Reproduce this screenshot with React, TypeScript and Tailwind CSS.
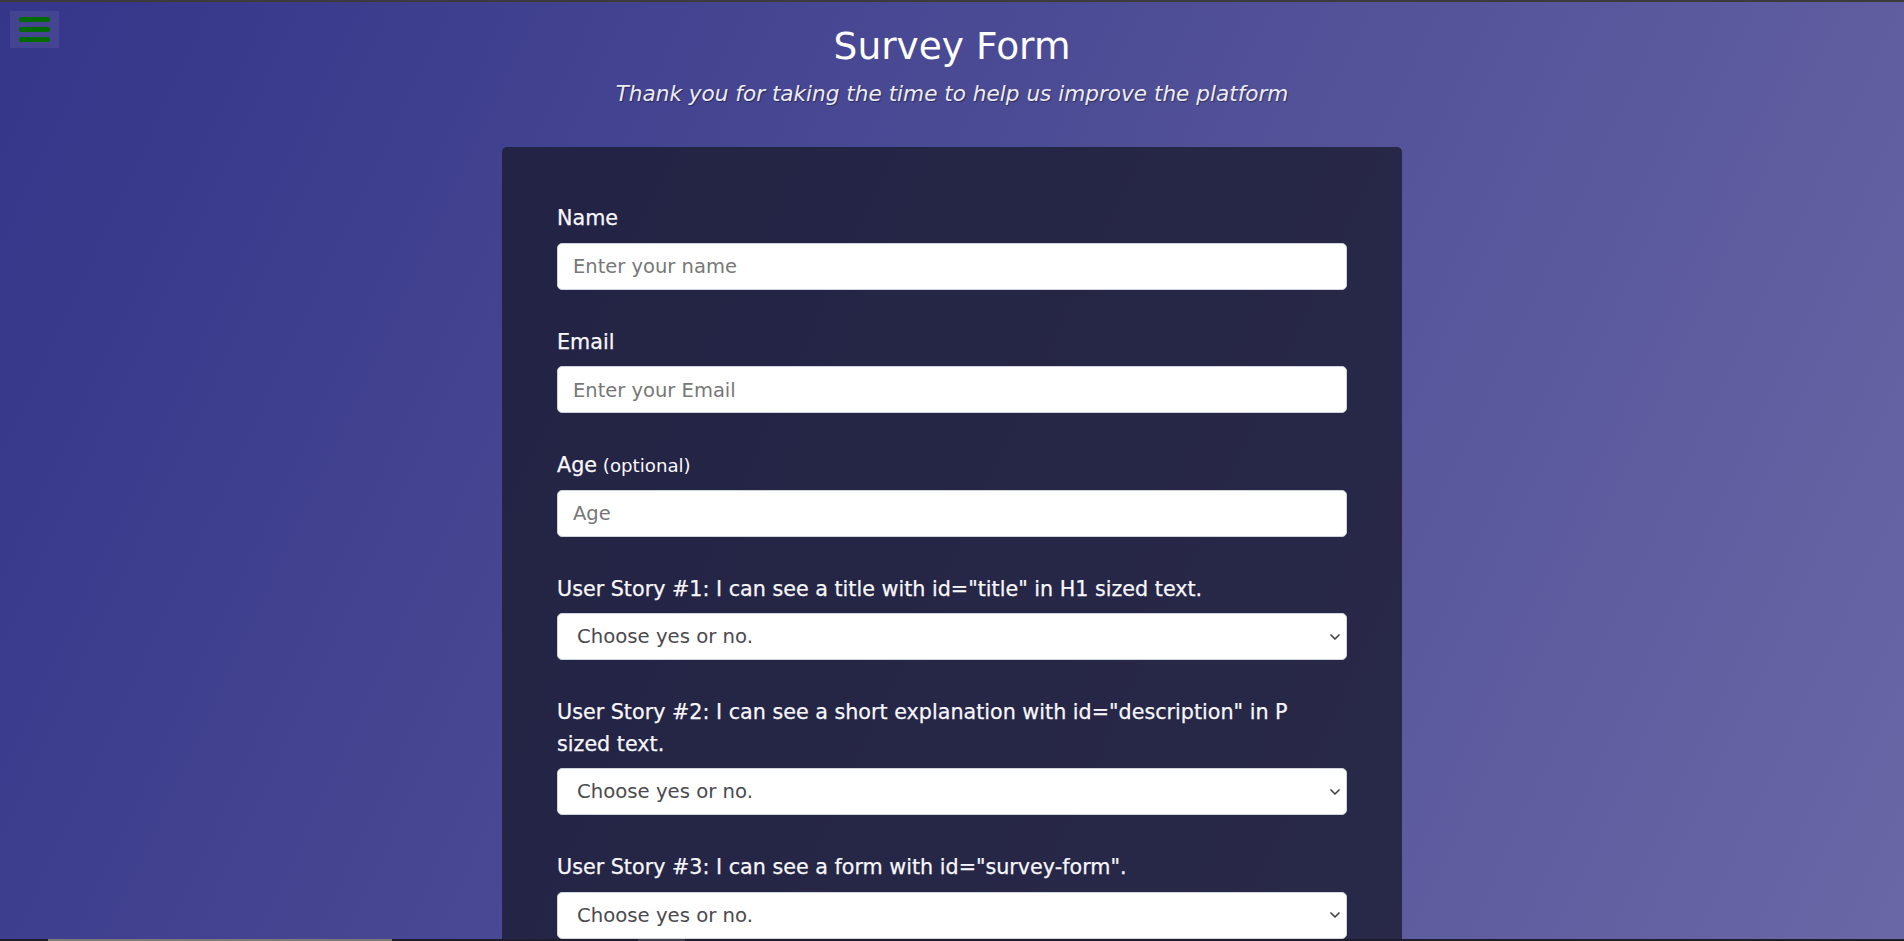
const questions = [
  'User Story #1: I can see a title with id="title" in H1 sized text.',
  'User Story #2: I can see a short explanation with id="description" in P sized text.',
  'User Story #3: I can see a form with id="survey-form".',
  'User Story #4: Inside the form element, I am required to enter my name in a field with id="name".',
];

function Chevron() {
  return (
    <svg
      className="pointer-events-none absolute right-[7px] top-1/2 -translate-y-1/2"
      width="10"
      height="6"
      viewBox="0 0 10 6"
      fill="none"
    >
      <path d="M1 1l4 4 4-4" stroke="#444" strokeWidth="1.7" strokeLinecap="round" strokeLinejoin="round" />
    </svg>
  );
}

function TextField({ label, placeholder, hint }: { label: string; placeholder: string; hint?: string }) {
  return (
    <div className="flex flex-col gap-[8px]">
      <label className="pt-[2px] text-[20.7px] leading-[31.5px] text-[#f7f7fb] [-webkit-text-stroke:0.25px_#f7f7fb]">
        {label}
        {hint && <span className="text-[18.2px] [-webkit-text-stroke:0px]"> {hint}</span>}
      </label>
      <input
        placeholder={placeholder}
        className="h-[47px] w-full rounded-[5px] border border-[#ced4da] bg-white px-[15px] pt-[1px] text-[19.5px] text-[#495057] outline-none placeholder:text-[#777]"
      />
    </div>
  );
}

function SelectField({ label }: { label: string }) {
  return (
    <div className="flex flex-col gap-[8px]">
      <label className="pt-[2px] text-[20.7px] leading-[31.5px] text-[#f7f7fb] [-webkit-text-stroke:0.25px_#f7f7fb]">{label}</label>
      <div className="relative">
        <select
          defaultValue=""
          className="h-[47px] w-full appearance-none rounded-[5px] border border-[#ced4da] bg-white pl-[19px] pr-8 pt-[1px] text-[19.7px] text-[#4a4a4f] outline-none"
        >
          <option value="" disabled>
            Choose yes or no.
          </option>
          <option>Yes</option>
          <option>No</option>
        </select>
        <Chevron />
      </div>
    </div>
  );
}

export default function App() {
  return (
    <div className="min-h-screen border-t-2 border-[#3b3b3b] bg-[linear-gradient(115deg,#35358a_0%,#4b4b95_45%,#6a67a6_100%)] bg-fixed font-['DejaVu_Sans',sans-serif] text-white">
      <button className="fixed left-[10px] top-[11px] flex h-[37px] w-[49px] flex-col items-center justify-center gap-[5px] bg-white/[0.07]">
        <span className="h-[5px] w-[31px] rounded-full bg-[#006b00]" />
        <span className="h-[5px] w-[31px] rounded-full bg-[#006b00]" />
        <span className="h-[5px] w-[31px] rounded-full bg-[#006b00]" />
      </button>

      <header className="flex flex-col items-center pt-[21px]">
        <h1 id="title" className="text-[37.5px] leading-[46px] font-normal">
          Survey Form
        </h1>
        <p
          id="description"
          className="mt-[10px] text-[21.6px] leading-[30px] font-extralight italic text-[#ececf6] [text-shadow:1px_1px_1px_rgba(0,0,0,0.4)]"
        >
          Thank you for taking the time to help us improve the platform
        </p>
      </header>

      <main className="mx-auto mt-[38px] w-[900px] rounded-[5px] bg-[rgba(27,27,50,0.8)] px-[55px] pb-[60px] pt-[54px]">
        <form id="survey-form" className="flex flex-col gap-[35px]">
          <TextField label="Name" placeholder="Enter your name" />
          <TextField label="Email" placeholder="Enter your Email" />
          <TextField label="Age" hint="(optional)" placeholder="Age" />
          {questions.map((q) => (
            <SelectField key={q} label={q} />
          ))}
        </form>
      </main>

      <div className="fixed bottom-0 left-0 right-0 flex h-[2px] bg-[#1d1d2e]">
        <div className="ml-[48px] w-[344px] bg-[#7a7a7a]" />
        <div className="ml-[246px] w-[47px] bg-[#3c3c4a]" />
      </div>
    </div>
  );
}
